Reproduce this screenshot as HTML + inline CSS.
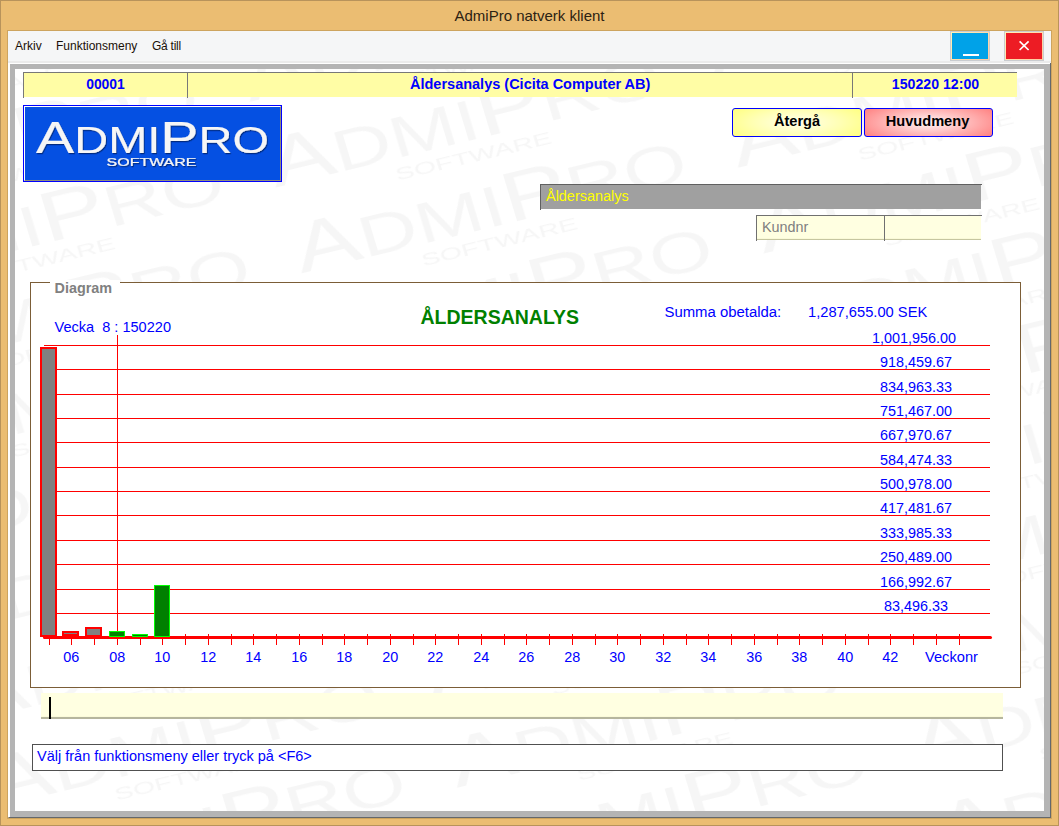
<!DOCTYPE html><html><head><meta charset="utf-8"><title>AdmiPro natverk klient</title><style>
html,body{margin:0;padding:0;}
body{width:1059px;height:826px;overflow:hidden;position:relative;background:#EBBD72;font-family:"Liberation Sans",sans-serif;}
.a{position:absolute;}
.t{position:absolute;white-space:nowrap;line-height:1;}
.b{font-weight:bold;}
.blue{color:#0000FF;}
.f{font-size:14.4px;}
</style></head><body>
<div class="a" style="left:0;top:0;width:1057px;height:824px;border:1px solid #B8935B;"></div>
<div class="t" style="left:0;width:1059px;top:8px;text-align:center;font-size:15px;color:#2B2213;">AdmiPro natverk klient</div>
<div class="a" style="left:7px;top:30px;width:1043px;height:787px;border:1px solid #CDA45F;background:#FFFFFF;"></div>
<div class="a" style="left:8px;top:31px;width:1043px;height:30px;background:#F5F6F7;"></div>
<div class="a" style="left:8px;top:61px;width:1043px;height:2px;background:#EBEBEB;"></div>
<div class="t" style="left:15px;top:40px;font-size:12px;color:#1A1008;">Arkiv</div>
<div class="t" style="left:56px;top:40px;font-size:12px;color:#1A1008;">Funktionsmeny</div>
<div class="t" style="left:152px;top:40px;font-size:12px;letter-spacing:-0.25px;color:#1A1008;">Gå till</div>
<div class="a" style="left:950px;top:31px;width:38px;height:28px;border:1px solid #C9CCD0;background:linear-gradient(135deg,#FFF3B8,#FFC9A0);"><div class="a" style="left:1px;top:1px;width:36px;height:26px;background:#00A2E8;"></div><div class="a" style="left:12px;top:22px;width:16px;height:2px;background:#fff;"></div></div>
<div class="a" style="left:1004px;top:31px;width:38px;height:28px;border:1px solid #C9CCD0;background:linear-gradient(135deg,#FFF3B8,#FFC9A0);"><div class="a" style="left:1px;top:1px;width:36px;height:26px;background:#ED1C24;"></div><svg class="a" style="left:13px;top:8px" width="12" height="11" viewBox="0 0 12 11"><path d="M1.6 1.4 L10.6 10 M10.6 1.4 L1.6 10" stroke="#fff" stroke-width="1.7" fill="none"/></svg></div>
<div class="a" style="left:10px;top:64px;width:1029px;height:742px;border-style:solid;border-color:#B4B4B4;border-width:5px 6px 6px 5px;background:#fff;"></div>
<div class="a" style="left:1050px;top:63px;width:1px;height:755px;background:#64686C;"></div>
<div class="a" style="left:9px;top:817px;width:1042px;height:1px;background:#64686C;"></div>
<div class="a" style="left:8px;top:817px;width:1px;height:1px;background:#B0A08A;"></div>
<svg class="a" style="left:15px;top:69px;filter:blur(0.6px)" width="1029" height="742" viewBox="15 69 1029 742"><defs><pattern id="wm" width="449" height="89.43" patternUnits="userSpaceOnUse" patternTransform="translate(279.2,217.4) rotate(-13.6) matrix(1,0,0.0562,1,0,0)"><text x="5" y="60" textLength="401" lengthAdjust="spacingAndGlyphs" fill="#F6F6F6" font-family="Liberation Sans, sans-serif"><tspan font-size="69.7">A</tspan><tspan font-size="57.3">DMI</tspan><tspan font-size="69.7">P</tspan><tspan font-size="57.3">RO</tspan></text><text x="124" y="81.4" textLength="160" lengthAdjust="spacingAndGlyphs" fill="#F6F6F6" font-size="16.2" font-family="Liberation Sans, sans-serif">SOFTWARE</text></pattern></defs><rect x="15" y="69" width="1029" height="742" fill="url(#wm)"/></svg>
<div class="a" style="left:23px;top:72px;width:994px;height:1px;background:#787878;"></div>
<div class="a" style="left:24px;top:73px;width:993px;height:24px;background:#FFFDA5;"></div>
<div class="a" style="left:23px;top:72px;width:1px;height:26px;background:#787878;"></div>
<div class="a" style="left:187px;top:72px;width:1px;height:26px;background:#787878;"></div>
<div class="a" style="left:852px;top:72px;width:1px;height:26px;background:#787878;"></div>
<div class="t b blue" style="left:24px;width:163px;text-align:center;top:78px;font-size:13.9px;">00001</div>
<div class="t b blue" style="left:410px;top:77px;font-size:14.5px;">Åldersanalys (Cicita Computer AB)</div>
<div class="t b blue" style="left:853px;width:165px;text-align:center;top:77px;font-size:14.15px;">150220 12:00</div>
<div class="a" style="left:23px;top:105px;width:257px;height:75px;border:1px solid #0000FF;background:#0550E2;"><div class="a" style="left:0;top:0;width:255px;height:73px;border-style:solid;border-width:1px;border-color:#FFFFFF #8E8E7C #8E8E7C #FFFFFF;"></div></div>
<svg class="a" style="left:23px;top:105px" width="259" height="77" viewBox="0 0 259 77"><defs><filter id="sh" x="-5%" y="-20%" width="110%" height="150%"><feDropShadow dx="0.9" dy="1.2" stdDeviation="0.7" flood-color="#001040" flood-opacity="0.6"/></filter><linearGradient id="lg" x1="0" y1="0" x2="0" y2="1"><stop offset="0" stop-color="#FFFFFF"/><stop offset="1" stop-color="#E0E0E0"/></linearGradient></defs><g filter="url(#sh)"><text x="13" y="48.1" textLength="233" lengthAdjust="spacingAndGlyphs" fill="#F6F6F6" stroke="#F6F6F6" stroke-width="0.15" font-family="Liberation Sans, sans-serif"><tspan font-size="43.9">A</tspan><tspan font-size="36">DMI</tspan><tspan font-size="43.9">P</tspan><tspan font-size="36">RO</tspan></text><text x="83.6" y="61.08" textLength="89.8" lengthAdjust="spacingAndGlyphs" fill="#F6F6F6" stroke="#F6F6F6" stroke-width="0.2" font-size="11.7" font-family="Liberation Sans, sans-serif">SOFTWARE</text></g></svg>
<div class="a" style="left:732px;top:108px;width:128px;height:27px;border:1px solid #0000FF;border-radius:3px;background:radial-gradient(ellipse 62% 85% at 50% 50%,#FFFFEC 0%,#FFFFB4 55%,#FFFF80 100%);"></div>
<div class="a" style="left:864px;top:108px;width:127px;height:27px;border:1px solid #0000FF;border-radius:3px;background:radial-gradient(ellipse 62% 85% at 50% 50%,#FFF6F6 0%,#FFB4B4 55%,#FF8080 100%);"></div>
<div class="t b" style="left:732px;width:130px;text-align:center;top:114px;font-size:14.6px;color:#000;">Återgå</div>
<div class="t b" style="left:863px;width:129px;text-align:center;top:114px;font-size:14.6px;color:#000;">Huvudmeny</div>
<div class="a" style="left:540px;top:184px;width:441px;height:25px;background:#A0A0A0;"></div>
<div class="a" style="left:540px;top:184px;width:442px;height:1px;background:#606060;"></div>
<div class="a" style="left:540px;top:184px;width:1px;height:26px;background:#606060;"></div>
<div class="t" style="left:546px;top:189px;font-size:14.45px;color:#FFFF00;">Åldersanalys</div>
<div class="a" style="left:756px;top:215px;width:225px;height:25px;background:#FFFFE1;"></div>
<div class="a" style="left:757px;top:238px;width:224px;height:1px;background:#FAFAD8;"></div>
<div class="a" style="left:757px;top:239px;width:224px;height:1px;background:#C6C6A0;"></div>
<div class="a" style="left:756px;top:215px;width:226px;height:1px;background:#707070;"></div>
<div class="a" style="left:756px;top:215px;width:1px;height:26px;background:#707070;"></div>
<div class="a" style="left:884px;top:215px;width:1px;height:26px;background:#707070;"></div>
<div class="t" style="left:762px;top:220px;font-size:14.4px;color:#808080;">Kundnr</div>
<div class="a" style="left:30px;top:282px;width:989px;height:404px;border:1px solid #7B5D37;background:#fff;"></div>
<div class="a" style="left:50px;top:280px;width:70px;height:5px;background:#fff;"></div>
<div class="t b" style="left:54.5px;top:281px;font-size:14.4px;color:#808080;">Diagram</div>
<div class="t blue" style="left:54.5px;top:320px;font-size:14.55px;white-space:pre;">Vecka  8 : 150220</div>
<div class="t b" style="left:420.5px;top:308px;font-size:19.5px;color:#008000;">ÅLDERSANALYS</div>
<div class="t blue" style="left:664.5px;top:305px;font-size:14.9px;">Summa obetalda:</div>
<div class="t blue" style="left:808px;top:305px;font-size:14.7px;">1,287,655.00 SEK</div>
<div class="a" style="left:44px;top:345px;width:946px;height:1px;background:#FF0000;"></div>
<div class="t blue" style="left:844px;width:140px;text-align:center;top:331px;font-size:14.4px;">1,001,956.00</div>
<div class="a" style="left:44px;top:369px;width:946px;height:1px;background:#FF0000;"></div>
<div class="t blue" style="left:846px;width:140px;text-align:center;top:355px;font-size:14.4px;">918,459.67</div>
<div class="a" style="left:44px;top:394px;width:946px;height:1px;background:#FF0000;"></div>
<div class="t blue" style="left:846px;width:140px;text-align:center;top:380px;font-size:14.4px;">834,963.33</div>
<div class="a" style="left:44px;top:418px;width:946px;height:1px;background:#FF0000;"></div>
<div class="t blue" style="left:846px;width:140px;text-align:center;top:404px;font-size:14.4px;">751,467.00</div>
<div class="a" style="left:44px;top:442px;width:946px;height:1px;background:#FF0000;"></div>
<div class="t blue" style="left:846px;width:140px;text-align:center;top:428px;font-size:14.4px;">667,970.67</div>
<div class="a" style="left:44px;top:467px;width:946px;height:1px;background:#FF0000;"></div>
<div class="t blue" style="left:846px;width:140px;text-align:center;top:453px;font-size:14.4px;">584,474.33</div>
<div class="a" style="left:44px;top:491px;width:946px;height:1px;background:#FF0000;"></div>
<div class="t blue" style="left:846px;width:140px;text-align:center;top:477px;font-size:14.4px;">500,978.00</div>
<div class="a" style="left:44px;top:515px;width:946px;height:1px;background:#FF0000;"></div>
<div class="t blue" style="left:846px;width:140px;text-align:center;top:501px;font-size:14.4px;">417,481.67</div>
<div class="a" style="left:44px;top:540px;width:946px;height:1px;background:#FF0000;"></div>
<div class="t blue" style="left:846px;width:140px;text-align:center;top:526px;font-size:14.4px;">333,985.33</div>
<div class="a" style="left:44px;top:564px;width:946px;height:1px;background:#FF0000;"></div>
<div class="t blue" style="left:846px;width:140px;text-align:center;top:550px;font-size:14.4px;">250,489.00</div>
<div class="a" style="left:44px;top:589px;width:946px;height:1px;background:#FF0000;"></div>
<div class="t blue" style="left:846px;width:140px;text-align:center;top:575px;font-size:14.4px;">166,992.67</div>
<div class="a" style="left:44px;top:613px;width:946px;height:1px;background:#FF0000;"></div>
<div class="t blue" style="left:846px;width:140px;text-align:center;top:599px;font-size:14.4px;">83,496.33</div>
<div class="a" style="left:117px;top:335px;width:1px;height:302px;background:#FF0000;"></div>
<div class="a" style="left:43px;top:636px;width:949px;height:3px;background:#FF0000;border-radius:1.5px;"></div>
<div class="a" style="left:49px;top:634px;width:1px;height:11px;background:#FF0000;"></div>
<div class="a" style="left:71px;top:634px;width:1px;height:11px;background:#FF0000;"></div>
<div class="t blue" style="left:51.35px;width:40px;text-align:center;top:650px;font-size:14.4px;">06</div>
<div class="a" style="left:94px;top:634px;width:1px;height:11px;background:#FF0000;"></div>
<div class="a" style="left:117px;top:634px;width:1px;height:11px;background:#FF0000;"></div>
<div class="t blue" style="left:97.35px;width:40px;text-align:center;top:650px;font-size:14.4px;">08</div>
<div class="a" style="left:140px;top:634px;width:1px;height:11px;background:#FF0000;"></div>
<div class="a" style="left:162px;top:634px;width:1px;height:11px;background:#FF0000;"></div>
<div class="t blue" style="left:142.35px;width:40px;text-align:center;top:650px;font-size:14.4px;">10</div>
<div class="a" style="left:185px;top:634px;width:1px;height:11px;background:#FF0000;"></div>
<div class="a" style="left:208px;top:634px;width:1px;height:11px;background:#FF0000;"></div>
<div class="t blue" style="left:188.35px;width:40px;text-align:center;top:650px;font-size:14.4px;">12</div>
<div class="a" style="left:231px;top:634px;width:1px;height:11px;background:#FF0000;"></div>
<div class="a" style="left:253px;top:634px;width:1px;height:11px;background:#FF0000;"></div>
<div class="t blue" style="left:233.35px;width:40px;text-align:center;top:650px;font-size:14.4px;">14</div>
<div class="a" style="left:276px;top:634px;width:1px;height:11px;background:#FF0000;"></div>
<div class="a" style="left:299px;top:634px;width:1px;height:11px;background:#FF0000;"></div>
<div class="t blue" style="left:279.35px;width:40px;text-align:center;top:650px;font-size:14.4px;">16</div>
<div class="a" style="left:322px;top:634px;width:1px;height:11px;background:#FF0000;"></div>
<div class="a" style="left:344px;top:634px;width:1px;height:11px;background:#FF0000;"></div>
<div class="t blue" style="left:324.35px;width:40px;text-align:center;top:650px;font-size:14.4px;">18</div>
<div class="a" style="left:367px;top:634px;width:1px;height:11px;background:#FF0000;"></div>
<div class="a" style="left:390px;top:634px;width:1px;height:11px;background:#FF0000;"></div>
<div class="t blue" style="left:370.35px;width:40px;text-align:center;top:650px;font-size:14.4px;">20</div>
<div class="a" style="left:413px;top:634px;width:1px;height:11px;background:#FF0000;"></div>
<div class="a" style="left:435px;top:634px;width:1px;height:11px;background:#FF0000;"></div>
<div class="t blue" style="left:415.35px;width:40px;text-align:center;top:650px;font-size:14.4px;">22</div>
<div class="a" style="left:458px;top:634px;width:1px;height:11px;background:#FF0000;"></div>
<div class="a" style="left:481px;top:634px;width:1px;height:11px;background:#FF0000;"></div>
<div class="t blue" style="left:461.35px;width:40px;text-align:center;top:650px;font-size:14.4px;">24</div>
<div class="a" style="left:504px;top:634px;width:1px;height:11px;background:#FF0000;"></div>
<div class="a" style="left:526px;top:634px;width:1px;height:11px;background:#FF0000;"></div>
<div class="t blue" style="left:506.35px;width:40px;text-align:center;top:650px;font-size:14.4px;">26</div>
<div class="a" style="left:549px;top:634px;width:1px;height:11px;background:#FF0000;"></div>
<div class="a" style="left:572px;top:634px;width:1px;height:11px;background:#FF0000;"></div>
<div class="t blue" style="left:552.35px;width:40px;text-align:center;top:650px;font-size:14.4px;">28</div>
<div class="a" style="left:595px;top:634px;width:1px;height:11px;background:#FF0000;"></div>
<div class="a" style="left:617px;top:634px;width:1px;height:11px;background:#FF0000;"></div>
<div class="t blue" style="left:597.35px;width:40px;text-align:center;top:650px;font-size:14.4px;">30</div>
<div class="a" style="left:640px;top:634px;width:1px;height:11px;background:#FF0000;"></div>
<div class="a" style="left:663px;top:634px;width:1px;height:11px;background:#FF0000;"></div>
<div class="t blue" style="left:643.35px;width:40px;text-align:center;top:650px;font-size:14.4px;">32</div>
<div class="a" style="left:686px;top:634px;width:1px;height:11px;background:#FF0000;"></div>
<div class="a" style="left:708px;top:634px;width:1px;height:11px;background:#FF0000;"></div>
<div class="t blue" style="left:688.35px;width:40px;text-align:center;top:650px;font-size:14.4px;">34</div>
<div class="a" style="left:731px;top:634px;width:1px;height:11px;background:#FF0000;"></div>
<div class="a" style="left:754px;top:634px;width:1px;height:11px;background:#FF0000;"></div>
<div class="t blue" style="left:734.35px;width:40px;text-align:center;top:650px;font-size:14.4px;">36</div>
<div class="a" style="left:777px;top:634px;width:1px;height:11px;background:#FF0000;"></div>
<div class="a" style="left:799px;top:634px;width:1px;height:11px;background:#FF0000;"></div>
<div class="t blue" style="left:779.35px;width:40px;text-align:center;top:650px;font-size:14.4px;">38</div>
<div class="a" style="left:822px;top:634px;width:1px;height:11px;background:#FF0000;"></div>
<div class="a" style="left:845px;top:634px;width:1px;height:11px;background:#FF0000;"></div>
<div class="t blue" style="left:825.35px;width:40px;text-align:center;top:650px;font-size:14.4px;">40</div>
<div class="a" style="left:868px;top:634px;width:1px;height:11px;background:#FF0000;"></div>
<div class="a" style="left:890px;top:634px;width:1px;height:11px;background:#FF0000;"></div>
<div class="t blue" style="left:870.35px;width:40px;text-align:center;top:650px;font-size:14.4px;">42</div>
<div class="a" style="left:913px;top:634px;width:1px;height:11px;background:#FF0000;"></div>
<div class="a" style="left:936px;top:634px;width:1px;height:11px;background:#FF0000;"></div>
<div class="a" style="left:959px;top:634px;width:1px;height:11px;background:#FF0000;"></div>
<div class="t blue" style="left:925px;top:650px;font-size:14.65px;">Veckonr</div>
<div class="a" style="left:40px;top:347px;width:17px;height:290px;background:#808080;border:2px solid #FF0000;box-sizing:border-box;"></div>
<div class="a" style="left:62px;top:631px;width:17px;height:5px;background:#808080;border:2px solid #FF0000;box-sizing:border-box;"></div>
<div class="a" style="left:85px;top:627px;width:17px;height:10px;background:#808080;border:2px solid #FF0000;box-sizing:border-box;"></div>
<div class="a" style="left:109px;top:631px;width:16px;height:6px;background:#008000;border:1px solid #00FF00;box-sizing:border-box;"></div>
<div class="a" style="left:132px;top:634px;width:16px;height:3px;background:#008000;border:1px solid #00FF00;box-sizing:border-box;"></div>
<div class="a" style="left:154px;top:585px;width:16px;height:52px;background:#008000;border:1px solid #00FF00;box-sizing:border-box;"></div>
<div class="a" style="left:41px;top:693px;width:962px;height:24px;background:#FFFFE1;"></div>
<div class="a" style="left:41px;top:716px;width:962px;height:1px;background:#FBFBD9;"></div>
<div class="a" style="left:41px;top:717px;width:962px;height:2px;background:#B6B69E;"></div>
<div class="a" style="left:49px;top:697px;width:2px;height:22px;background:#000;"></div>
<div class="a" style="left:32px;top:744px;width:969px;height:25px;border:1px solid #505050;background:#fff;"></div>
<div class="t blue" style="left:37px;top:749px;font-size:14.5px;">Välj från funktionsmeny eller tryck på &lt;F6&gt;</div>
</body></html>
